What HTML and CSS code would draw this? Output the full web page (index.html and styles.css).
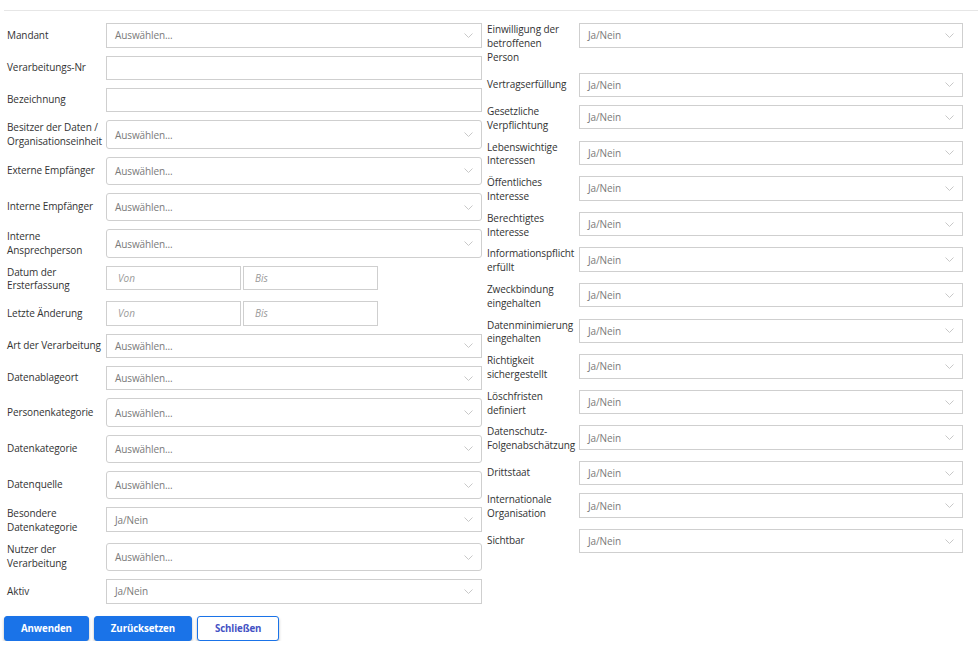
FILE: index.html
```html
<!DOCTYPE html>
<html lang="de">
<head>
<meta charset="utf-8">
<title>Filter</title>
<link rel="stylesheet" href="styles.css">
</head>
<body>
<div class="page">
  <div class="rule"></div>
  <div class="form">
    <div class="col col-left">
      <div class="lbl">Mandant</div>
      <div class="sel"><span>Auswählen...</span><svg class="chev" width="9" height="5" viewBox="0 0 9 5"><polyline points="0.5,0.5 4.5,4.5 8.5,0.5"/></svg></div>

      <div class="lbl">Verarbeitungs-Nr</div>
      <input class="txt" type="text">

      <div class="lbl">Bezeichnung</div>
      <input class="txt" type="text">

      <div class="lbl">Besitzer der Daten / Organisationseinheit</div>
      <div class="sel tall"><span>Auswählen...</span><svg class="chev" width="9" height="5" viewBox="0 0 9 5"><polyline points="0.5,0.5 4.5,4.5 8.5,0.5"/></svg></div>

      <div class="lbl">Externe Empfänger</div>
      <div class="sel tall"><span>Auswählen...</span><svg class="chev" width="9" height="5" viewBox="0 0 9 5"><polyline points="0.5,0.5 4.5,4.5 8.5,0.5"/></svg></div>

      <div class="lbl">Interne Empfänger</div>
      <div class="sel tall"><span>Auswählen...</span><svg class="chev" width="9" height="5" viewBox="0 0 9 5"><polyline points="0.5,0.5 4.5,4.5 8.5,0.5"/></svg></div>

      <div class="lbl">Interne Ansprechperson</div>
      <div class="sel tall"><span>Auswählen...</span><svg class="chev" width="9" height="5" viewBox="0 0 9 5"><polyline points="0.5,0.5 4.5,4.5 8.5,0.5"/></svg></div>

      <div class="lbl">Datum der Ersterfassung</div>
      <div class="range"><input class="txt date" type="text" placeholder="Von"><input class="txt date" type="text" placeholder="Bis"></div>

      <div class="lbl">Letzte Änderung</div>
      <div class="range"><input class="txt date" type="text" placeholder="Von"><input class="txt date" type="text" placeholder="Bis"></div>

      <div class="lbl">Art der Verarbeitung</div>
      <div class="sel"><span>Auswählen...</span><svg class="chev" width="9" height="5" viewBox="0 0 9 5"><polyline points="0.5,0.5 4.5,4.5 8.5,0.5"/></svg></div>

      <div class="lbl">Datenablageort</div>
      <div class="sel"><span>Auswählen...</span><svg class="chev" width="9" height="5" viewBox="0 0 9 5"><polyline points="0.5,0.5 4.5,4.5 8.5,0.5"/></svg></div>

      <div class="lbl">Personenkategorie</div>
      <div class="sel tall"><span>Auswählen...</span><svg class="chev" width="9" height="5" viewBox="0 0 9 5"><polyline points="0.5,0.5 4.5,4.5 8.5,0.5"/></svg></div>

      <div class="lbl">Datenkategorie</div>
      <div class="sel tall"><span>Auswählen...</span><svg class="chev" width="9" height="5" viewBox="0 0 9 5"><polyline points="0.5,0.5 4.5,4.5 8.5,0.5"/></svg></div>

      <div class="lbl">Datenquelle</div>
      <div class="sel tall"><span>Auswählen...</span><svg class="chev" width="9" height="5" viewBox="0 0 9 5"><polyline points="0.5,0.5 4.5,4.5 8.5,0.5"/></svg></div>

      <div class="lbl">Besondere Datenkategorie</div>
      <div class="sel"><span>Ja/Nein</span><svg class="chev" width="9" height="5" viewBox="0 0 9 5"><polyline points="0.5,0.5 4.5,4.5 8.5,0.5"/></svg></div>

      <div class="lbl">Nutzer der Verarbeitung</div>
      <div class="sel tall"><span>Auswählen...</span><svg class="chev" width="9" height="5" viewBox="0 0 9 5"><polyline points="0.5,0.5 4.5,4.5 8.5,0.5"/></svg></div>

      <div class="lbl">Aktiv</div>
      <div class="sel"><span>Ja/Nein</span><svg class="chev" width="9" height="5" viewBox="0 0 9 5"><polyline points="0.5,0.5 4.5,4.5 8.5,0.5"/></svg></div>
    </div>

    <div class="col col-right">
      <div class="lbl">Einwilligung der betroffenen Person</div>
      <div class="sel"><span>Ja/Nein</span><svg class="chev" width="9" height="5" viewBox="0 0 9 5"><polyline points="0.5,0.5 4.5,4.5 8.5,0.5"/></svg></div>

      <div class="lbl">Vertragserfüllung</div>
      <div class="sel"><span>Ja/Nein</span><svg class="chev" width="9" height="5" viewBox="0 0 9 5"><polyline points="0.5,0.5 4.5,4.5 8.5,0.5"/></svg></div>

      <div class="lbl">Gesetzliche Verpflichtung</div>
      <div class="sel"><span>Ja/Nein</span><svg class="chev" width="9" height="5" viewBox="0 0 9 5"><polyline points="0.5,0.5 4.5,4.5 8.5,0.5"/></svg></div>

      <div class="lbl">Lebenswichtige Interessen</div>
      <div class="sel"><span>Ja/Nein</span><svg class="chev" width="9" height="5" viewBox="0 0 9 5"><polyline points="0.5,0.5 4.5,4.5 8.5,0.5"/></svg></div>

      <div class="lbl">Öffentliches Interesse</div>
      <div class="sel"><span>Ja/Nein</span><svg class="chev" width="9" height="5" viewBox="0 0 9 5"><polyline points="0.5,0.5 4.5,4.5 8.5,0.5"/></svg></div>

      <div class="lbl">Berechtigtes Interesse</div>
      <div class="sel"><span>Ja/Nein</span><svg class="chev" width="9" height="5" viewBox="0 0 9 5"><polyline points="0.5,0.5 4.5,4.5 8.5,0.5"/></svg></div>

      <div class="lbl">Informationspflicht erfüllt</div>
      <div class="sel"><span>Ja/Nein</span><svg class="chev" width="9" height="5" viewBox="0 0 9 5"><polyline points="0.5,0.5 4.5,4.5 8.5,0.5"/></svg></div>

      <div class="lbl">Zweckbindung eingehalten</div>
      <div class="sel"><span>Ja/Nein</span><svg class="chev" width="9" height="5" viewBox="0 0 9 5"><polyline points="0.5,0.5 4.5,4.5 8.5,0.5"/></svg></div>

      <div class="lbl">Datenminimierung eingehalten</div>
      <div class="sel"><span>Ja/Nein</span><svg class="chev" width="9" height="5" viewBox="0 0 9 5"><polyline points="0.5,0.5 4.5,4.5 8.5,0.5"/></svg></div>

      <div class="lbl">Richtigkeit sichergestellt</div>
      <div class="sel"><span>Ja/Nein</span><svg class="chev" width="9" height="5" viewBox="0 0 9 5"><polyline points="0.5,0.5 4.5,4.5 8.5,0.5"/></svg></div>

      <div class="lbl">Löschfristen definiert</div>
      <div class="sel"><span>Ja/Nein</span><svg class="chev" width="9" height="5" viewBox="0 0 9 5"><polyline points="0.5,0.5 4.5,4.5 8.5,0.5"/></svg></div>

      <div class="lbl">Datenschutz-Folgenabschätzung</div>
      <div class="sel"><span>Ja/Nein</span><svg class="chev" width="9" height="5" viewBox="0 0 9 5"><polyline points="0.5,0.5 4.5,4.5 8.5,0.5"/></svg></div>

      <div class="lbl">Drittstaat</div>
      <div class="sel"><span>Ja/Nein</span><svg class="chev" width="9" height="5" viewBox="0 0 9 5"><polyline points="0.5,0.5 4.5,4.5 8.5,0.5"/></svg></div>

      <div class="lbl">Internationale Organisation</div>
      <div class="sel"><span>Ja/Nein</span><svg class="chev" width="9" height="5" viewBox="0 0 9 5"><polyline points="0.5,0.5 4.5,4.5 8.5,0.5"/></svg></div>

      <div class="lbl">Sichtbar</div>
      <div class="sel"><span>Ja/Nein</span><svg class="chev" width="9" height="5" viewBox="0 0 9 5"><polyline points="0.5,0.5 4.5,4.5 8.5,0.5"/></svg></div>
    </div>
  </div>

  <div class="actions">
    <button class="btn primary" type="button">Anwenden</button>
    <button class="btn primary" type="button">Zurücksetzen</button>
    <button class="btn outline" type="button">Schließen</button>
  </div>
</div>
</body>
</html>
```
FILE: styles.css
```css
* { box-sizing: border-box; }

html, body {
  margin: 0;
  padding: 0;
  background: #ffffff;
}

body {
  font-family: "Open Sans", "Liberation Sans", Arial, sans-serif;
  font-size: 10px;
  letter-spacing: -0.1px;
  color: #333333;
}

.page {
  padding: 10px 0 0 4px;
}

.rule {
  border-top: 1px solid #e6e6e6;
  height: 0;
}

.form {
  display: flex;
  align-items: flex-start;
  gap: 2px;
  margin-top: 12.3px;
}

.col {
  display: grid;
  row-gap: 8px;
  align-items: start;
  align-content: start;
}

.col-left {
  grid-template-columns: 102px 376px;
}

.col-right {
  grid-template-columns: 95px 384px;
}

.lbl {
  align-self: stretch;
  display: flex;
  align-items: center;
  padding-left: 3px;
  line-height: 13.8px;
  color: #333333;
}

.col-right .lbl {
  padding-right: 12px;
}

.sel,
.txt {
  height: 24.4px;
  border: 1px solid #cfcfcf;
  background: #ffffff;
}

.sel {
  display: flex;
  align-items: center;
  justify-content: space-between;
  padding: 0 8px 0 8px;
  color: #7a7a7a;
}

.sel.tall {
  height: 28.3px;
  border-radius: 3px;
}

.chev {
  display: block;
  fill: none;
  stroke: #c8c8c8;
  stroke-width: 1;
}

.txt {
  display: block;
  width: 100%;
  margin: 0;
  padding: 0 8px;
  font: inherit;
  outline: none;
}

.range {
  display: flex;
  gap: 2px;
  width: 272px;
}

.date {
  flex: 1 1 0;
  padding-left: 11px;
}

.date::placeholder {
  color: #9a9a9a;
  font-style: italic;
}

.actions {
  display: flex;
  gap: 5px;
  margin-top: 12.6px;
}

.btn {
  height: 25px;
  padding: 0 16px;
  font-family: inherit;
  font-size: 9.7px;
  font-weight: 700;
  letter-spacing: -0.1px;
  border-radius: 3px;
  cursor: pointer;
  box-shadow: 0 2px 3px rgba(0, 0, 0, 0.28);
}

.btn.primary {
  background: #1a73e8;
  border: 1px solid #1a73e8;
  color: #ffffff;
}

.btn.outline {
  background: #ffffff;
  border: 1px solid #1a73e8;
  color: #4451c4;
  padding: 0 17px;
}
```
